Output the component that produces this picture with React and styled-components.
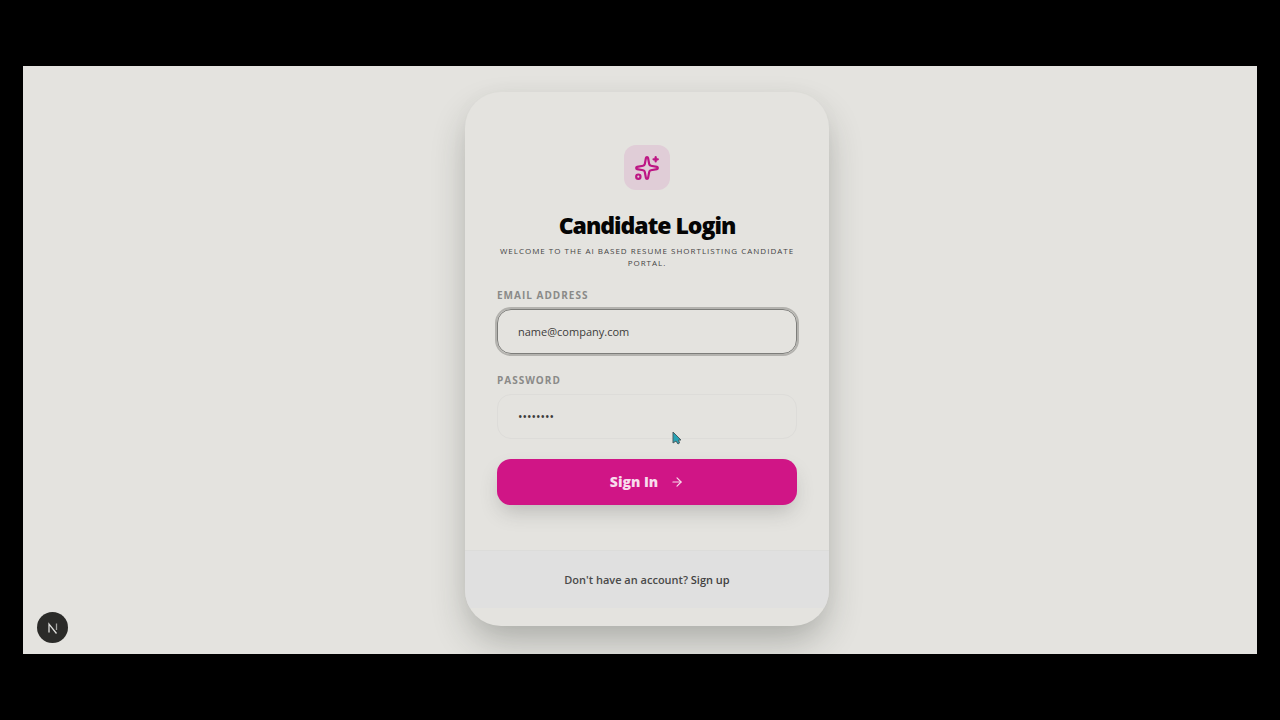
import React from "react";
import styled, { createGlobalStyle } from "styled-components";
import { ArrowRight, Sparkles } from "lucide-react";

const GlobalStyle = createGlobalStyle`
  *, *::before, *::after { box-sizing: border-box; }
  body {
    margin: 0;
    background: #000;
    font-family: "Open Sans", "Noto Sans", sans-serif;
  }
`;

const Frame = styled.div`
  display: flex;
  min-height: 100vh;
  padding: 66px 23px;
`;

const Page = styled.main`
  position: relative;
  flex: 1;
  display: flex;
  justify-content: center;
  align-items: flex-start;
  padding: 26px 0 28px 14px;
  overflow: hidden;
  background: #e4e3df;
`;

const Card = styled.section`
  width: 100%;
  max-width: 364px;
  padding: 53px 0 18px;
  border-radius: 36px;
  overflow: hidden;
  background: #e4e3df;
  box-shadow: 0 18px 36px -4px rgba(40, 45, 40, 0.3), 0 0 24px rgba(40, 45, 40, 0.02);
`;

const Header = styled.header`
  display: flex;
  flex-direction: column;
  align-items: center;
  padding: 0 32px;
  text-align: center;
`;

const LogoTile = styled.div`
  display: grid;
  place-items: center;
  width: 46px;
  height: 45px;
  border-radius: 12px;
  background: #e0cdd7;
  color: #bd1684;
`;

const Title = styled.h1`
  margin: 20px 0 5px;
  font-size: 23px;
  line-height: 30px;
  font-weight: 800;
  letter-spacing: -1px;
  color: #050505;
`;

const Subtitle = styled.p`
  margin: 0;
  font-size: 8px;
  line-height: 12px;
  font-weight: 400;
  letter-spacing: 1px;
  text-transform: uppercase;
  color: #444;
`;

const Form = styled.form`
  display: flex;
  flex-direction: column;
  gap: 20px;
  padding: 20px 32px 45px;
`;

const Field = styled.div`
  display: flex;
  flex-direction: column;
  gap: 8px;
`;

const Label = styled.label`
  font-size: 10px;
  line-height: 12px;
  font-weight: 700;
  letter-spacing: 1px;
  text-transform: uppercase;
  color: #8a8a88;
`;

const Input = styled.input`
  width: 100%;
  height: 45px;
  padding: 0 20px;
  border: 1px solid ${(p) => (p.$active ? "#7d7d7a" : "#dddcd9")};
  border-radius: 14px;
  outline: none;
  background: transparent;
  box-shadow: ${(p) => (p.$active ? "0 0 0 2px #b3b2ae" : "none")};
  font-family: inherit;
  font-size: ${(p) => (p.type === "password" ? "12px" : "11px")};
  color: #3c3c3a;
  &::placeholder { color: #3c3c3a; opacity: 1; }
`;

const SubmitButton = styled.button`
  display: flex;
  align-items: center;
  justify-content: center;
  gap: 12px;
  height: 46px;
  border: 0;
  border-radius: 14px;
  background: #d01586;
  box-shadow: 0 10px 20px -4px rgba(60, 60, 60, 0.25);
  font-family: inherit;
  font-size: 14px;
  line-height: 18px;
  font-weight: 800;
  color: #f8dcec;
`;

const Footer = styled.footer`
  padding: 20px 32px;
  border-top: 1px solid #dcdcda;
  background: #e0e0e0;
  font-size: 11px;
  line-height: 17px;
  font-weight: 600;
  text-align: center;
  color: #4a4a4a;
`;

const SignUpLink = styled.a`
  color: #404040;
  text-decoration: none;
`;

const DevBadge = styled.button`
  position: absolute;
  left: 14px;
  bottom: 11px;
  display: grid;
  place-items: center;
  width: 31px;
  height: 31px;
  padding: 0;
  border: 0;
  border-radius: 50%;
  background: #2b2b29;
`;

const Pointer = styled.svg`
  position: absolute;
  left: 649px;
  top: 365px;
`;

function TextField({ id, label, ...rest }) {
  return (
    <Field>
      <Label htmlFor={id}>{label}</Label>
      <Input id={id} {...rest} />
    </Field>
  );
}

export default function App() {
  return (
    <>
      <GlobalStyle />
      <Frame>
        <Page>
          <Card>
            <Header>
              <LogoTile>
                <Sparkles size={26} />
              </LogoTile>
              <Title>Candidate Login</Title>
              <Subtitle>Welcome to the AI based resume shortlisting candidate portal.</Subtitle>
            </Header>
            <Form onSubmit={(e) => e.preventDefault()}>
              <TextField id="email" label="Email Address" type="email" placeholder="name@company.com" $active />
              <TextField id="password" label="Password" type="password" placeholder="••••••••" />
              <SubmitButton type="submit">
                Sign In
                <ArrowRight size={14} strokeWidth={2} />
              </SubmitButton>
            </Form>
            <Footer>
              Don't have an account? <SignUpLink href="#signup">Sign up</SignUpLink>
            </Footer>
          </Card>
          <DevBadge type="button" aria-label="Open developer tools">
            <svg width="12" height="12" viewBox="0 0 12 12" fill="none">
              <path d="M2 10.500V2L9.500 11.500" stroke="#dededb" strokeWidth="1.300" />
              <path d="M9.500 1.500V8" stroke="#a3a3a0" strokeWidth="1.300" />
            </svg>
          </DevBadge>
          <Pointer width="10" height="14" viewBox="0 0 10 14" aria-hidden="true">
            <path d="M1 1V12L4 10L6 13L7.500 12L6.500 9H9Z" fill="#26a3b5" stroke="#4d5c60" strokeWidth="1" />
          </Pointer>
        </Page>
      </Frame>
    </>
  );
}
